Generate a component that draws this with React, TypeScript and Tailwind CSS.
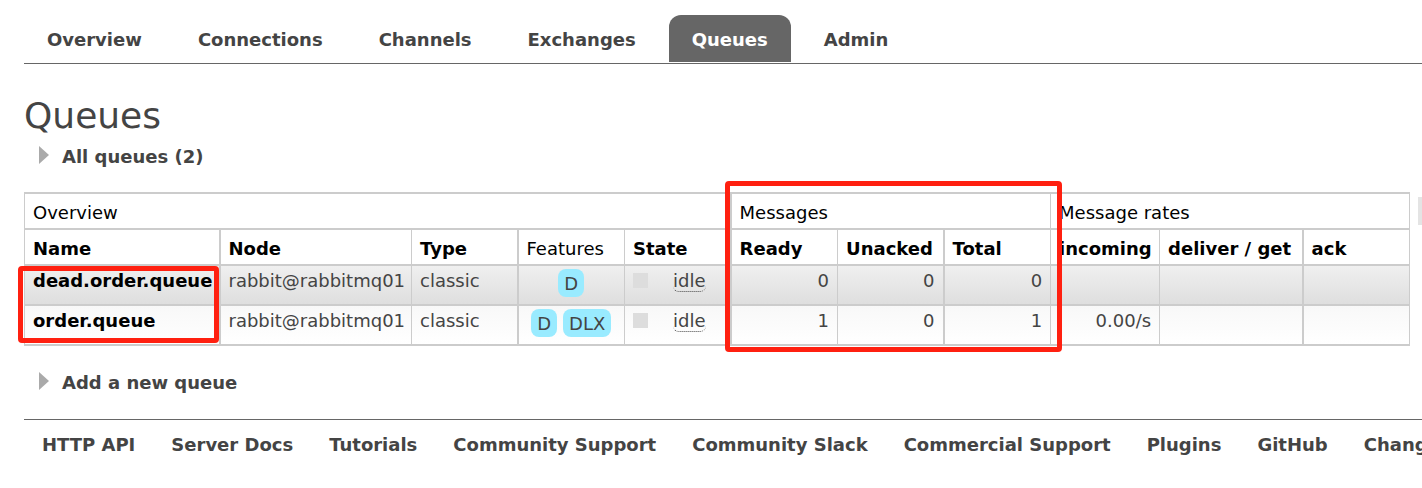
import React from "react";

const tabs = ["Overview", "Connections", "Channels", "Exchanges", "Queues", "Admin"];

const footerLinks = [
  "HTTP API",
  "Server Docs",
  "Tutorials",
  "Community Support",
  "Community Slack",
  "Commercial Support",
  "Plugins",
  "GitHub",
  "Changelog",
];

type Queue = {
  name: string;
  features: string[];
  ready: number;
  unacked: number;
  total: number;
  incoming: string;
  shade: string;
};

const queues: Queue[] = [
  {
    name: "dead.order.queue",
    features: ["D"],
    ready: 0,
    unacked: 0,
    total: 0,
    incoming: "",
    shade: "bg-linear-to-b from-[#f0f0f0] to-[#dedede]",
  },
  {
    name: "order.queue",
    features: ["D", "DLX"],
    ready: 1,
    unacked: 0,
    total: 1,
    incoming: "0.00/s",
    shade: "bg-linear-to-b from-[#f8f8f8] to-white",
  },
];

const thin = "border-[#cccccc] border-y-2 border-l px-2";
const thick = "border-[#cccccc] border-y-2 border-l-2 px-2";

function Section({ title }: { title: string }) {
  return (
    <h2>
      <button type="button" className="flex items-start pl-[15px] font-bold">
        <svg className="mt-px h-[18px] w-[10px]" viewBox="0 0 10 18" aria-hidden="true">
          <path d="M0 0 L10 9 L0 18 Z" fill="#aaaaaa" />
        </svg>
        <span className="pt-px pl-[13px]">{title}</span>
      </button>
    </h2>
  );
}

function Row({ queue }: { queue: Queue }) {
  return (
    <tr className={`h-10 align-top ${queue.shade}`}>
      <td className={`${thin} pt-1 whitespace-nowrap`}>
        <a href="#queue" className="font-bold text-black">{queue.name}</a>
      </td>
      <td className={`${thick} pt-1 whitespace-nowrap`}>rabbit@rabbitmq01</td>
      <td className={`${thin} pt-1`}>classic</td>
      <td className={`${thick} pt-[3px]`}>
        <div className="flex justify-center gap-[6px]">
          {queue.features.map((f) => (
            <span key={f} className="h-7 rounded-lg bg-[#99ebff] px-[6px] leading-[30px]">{f}</span>
          ))}
        </div>
      </td>
      <td className={`${thin} pt-1`}>
        <div className="flex items-start">
          <span className="mt-[3px] mr-[25px] h-[15px] w-[15px] bg-[#dddddd]" />
          <abbr className="h-[22px] rounded-[6px] border-b border-dotted border-[#444444] leading-[22px] no-underline">idle</abbr>
        </div>
      </td>
      <td className={`${thick} pt-1 text-right`}>{queue.ready}</td>
      <td className={`${thin} pt-1 text-right`}>{queue.unacked}</td>
      <td className={`${thick} pt-1 text-right`}>{queue.total}</td>
      <td className={`${thin} pt-1 text-right`}>{queue.incoming}</td>
      <td className={thin} />
      <td className={`${thick} border-r`} />
    </tr>
  );
}

export default function App() {
  return (
    <div className="min-h-screen overflow-hidden bg-white pl-6 font-['Verdana','DejaVu_Sans',sans-serif] text-[18px] leading-[22px] text-[#444444]">
      <nav className="flex gap-[10px] border-b border-[#666666] pt-[15px] pb-px">
        {tabs.map((t) => (
          <a
            key={t}
            href="#tab"
            className={
              t === "Queues"
                ? "h-[47px] rounded-t-xl bg-[#666666] px-[23px] pt-[14px] font-bold text-white"
                : "h-[47px] px-[23px] pt-[14px] font-bold"
            }
          >
            {t}
          </a>
        ))}
      </nav>

      <main>
        <h1 className="pt-[30px] text-[36px] leading-[44px]">Queues</h1>
        <div className="pt-[7px]">
          <Section title="All queues (2)" />
        </div>

        <div className="flex items-start gap-2 pt-6">
          <div className="relative flex-1">
            <table className="w-full table-fixed border-collapse">
              <colgroup>
                <col className="w-[195px]" />
                <col className="w-[192px]" />
                <col className="w-[106px]" />
                <col className="w-[107px]" />
                <col className="w-[106px]" />
                <col className="w-[107px]" />
                <col className="w-[106px]" />
                <col className="w-[107px]" />
                <col className="w-[109px]" />
                <col className="w-[143px]" />
                <col />
              </colgroup>
              <thead className="text-left whitespace-nowrap text-black">
                <tr className="h-9">
                  <th colSpan={5} className={`${thin} pt-1 font-normal`}>Overview</th>
                  <th colSpan={3} className={`${thick} pt-1 font-normal`}>Messages</th>
                  <th colSpan={3} className={`${thin} border-r pt-1 font-normal`}>Message rates</th>
                </tr>
                <tr className="h-9">
                  <th className={`${thin} pt-1`}>Name</th>
                  <th className={`${thick} pt-1`}>Node</th>
                  <th className={`${thin} pt-1`}>Type</th>
                  <th className={`${thick} pt-1 font-normal`}>Features</th>
                  <th className={`${thin} pt-1`}>State</th>
                  <th className={`${thick} pt-1`}>Ready</th>
                  <th className={`${thin} pt-1`}>Unacked</th>
                  <th className={`${thick} pt-1`}>Total</th>
                  <th className={`${thin} pt-1`}>incoming</th>
                  <th className={`${thin} pt-1`}>deliver / get</th>
                  <th className={`${thick} border-r pt-1`}>ack</th>
                </tr>
              </thead>
              <tbody>
                {queues.map((q) => (
                  <Row key={q.name} queue={q} />
                ))}
              </tbody>
            </table>
            <div className="pointer-events-none absolute top-[74px] -left-[6px] h-[77px] w-[201px] rounded-[4px] border-[5px] border-[#ff2010]" />
            <div className="pointer-events-none absolute -top-[11px] left-[701px] h-[171px] w-[337px] rounded-[4px] border-[5px] border-[#ff2010]" />
          </div>
          <div className="mt-[5px] h-7 w-1 bg-[#e4e4e4]" />
        </div>

        <div className="pt-[25px]">
          <Section title="Add a new queue" />
        </div>
      </main>

      <footer className="mt-[25px] flex gap-9 border-t border-[#666666] pt-[14px] pl-[18px] font-bold whitespace-nowrap">
        {footerLinks.map((l) => (
          <a key={l} href="#link">{l}</a>
        ))}
      </footer>
    </div>
  );
}
